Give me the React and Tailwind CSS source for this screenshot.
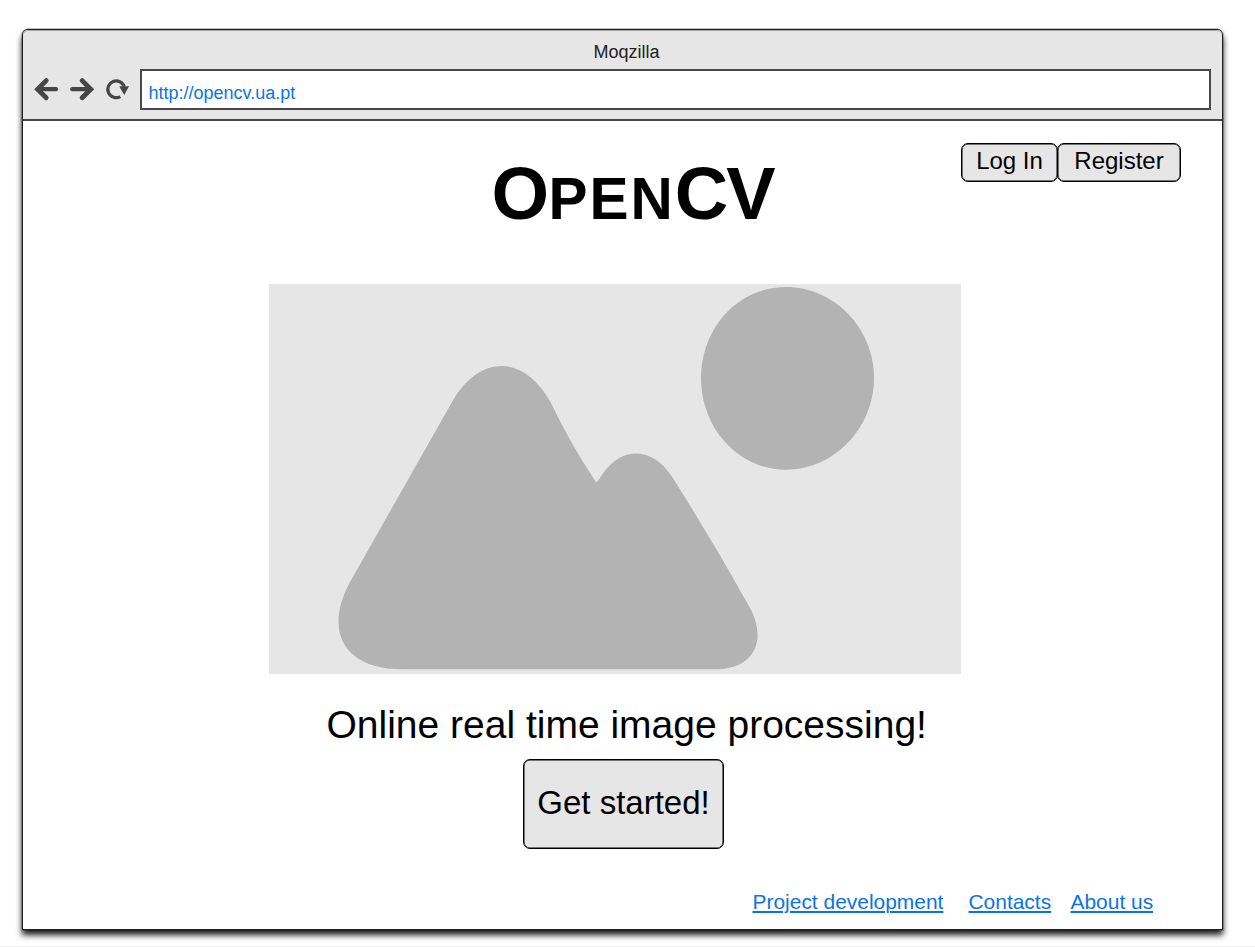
const BackArrow = () => (
  <svg width="26" height="26" viewBox="0 0 26 26" fill="none" stroke="#464646" strokeLinecap="round">
    <path d="M6 12.2H23" strokeWidth="4.2" />
    <path d="M13.200 3.600L4.600 12.200L13.200 20.800" strokeWidth="4.800" />
  </svg>
);

const ForwardArrow = () => (
  <svg width="26" height="26" viewBox="0 0 26 26" fill="none" stroke="#464646" strokeLinecap="round">
    <path d="M4.200 12.200H21" strokeWidth="4.2" />
    <path d="M14.200 3.600L22.800 12.200L14.200 20.800" strokeWidth="4.800" />
  </svg>
);

const Reload = () => (
  <svg width="26" height="26" viewBox="0 0 26 26" fill="none">
    <path d="M17.300 19.600A8.400 8.400 0 1 1 21.200 9.800" stroke="#464646" strokeWidth="3.200" />
    <path d="M16.200 9.200H26L21.200 18Z" fill="#464646" />
  </svg>
);

const Picture = () => (
  <svg className="block" width="692" height="390" viewBox="269 284 692 390">
    <rect x="269" y="284" width="692" height="390" fill="#e6e6e6" />
    <path
      d="M701 378C701 328 738 287 786 287C834 287 874 328 874 378C874 428 834 469.7 786 469.7C738 469.7 701 428 701 378Z"
      fill="#b3b3b3"
    />
    <path
      d="M452 402C479.500 354 523.500 354 550.500 402Q571 445 596.200 482.500C599 480 601 476 603 473.500C622 446.500 652 446.500 671.500 476Q713 541 749.500 607C767.500 640 755 669.300 715 669.300H402C343.500 669.300 323.500 631 350 582Z"
      fill="#b3b3b3"
    />
  </svg>
);

const Link = ({ children }) => (
  <a href="#" className="underline decoration-[1.5px] underline-offset-[2px]">{children}</a>
);

export default function App() {
  return (
    <div className="flex h-[947px] w-[1255px] flex-col overflow-hidden border-b border-[#eeeeee] bg-white pl-[22px] pt-[29px] font-['Liberation_Sans',Arial,sans-serif] text-black">
      <div className="flex h-[901px] w-[1201px] flex-col rounded-t-[6px] border border-[#231f20] bg-white shadow-[0_0_0_0.5px_rgba(35,31,32,0.5),0_5px_6px_rgba(0,0,0,0.9)]">
        <header className="flex h-[91px] shrink-0 flex-col rounded-t-[5px] border-b-2 border-[#4a4748] bg-[#e6e6e6] shadow-[inset_0_1px_0_#a8a6a6]">
          <div className="flex h-[39px] items-center justify-center pl-[8px] pt-[6px] text-[18px] text-[#222]">Moqzilla</div>
          <div className="flex h-[41px] items-center">
            <div className="flex w-[117px] gap-[9px] pl-[10px]">
              <BackArrow />
              <ForwardArrow />
              <Reload />
            </div>
            <div className="flex h-[41px] w-[1071px] items-center border-2 border-[#4a4748] bg-white pl-[6.500px] pt-[8px] text-[18px] text-[#0a74e6]">
              http://opencv.ua.pt
            </div>
          </div>
        </header>
        <main className="flex grow flex-col">
          <div className="flex h-[163px]">
            <h1 className="flex w-[938px] items-baseline pl-[468.500px] pt-[31px] text-[74px] font-bold leading-[84px]">
              <span className="tracking-[-0.500px]">O</span><span className="text-[58.500px] tracking-[2px]">PEN</span><span className="tracking-[-2px]">CV</span>
            </h1>
            <div className="flex pt-[22px] text-[24px]">
              <button className="flex h-[39px] w-[97px] justify-center rounded-[7px] border border-black bg-[#e6e6e6] pt-[3px] leading-[28px] shadow-[inset_0_0_0_0.5px_#000]">Log In</button>
              <button className="-ml-px flex h-[39px] w-[124px] justify-center rounded-[7px] border border-black bg-[#e6e6e6] pt-[3px] leading-[28px] shadow-[inset_0_0_0_0.5px_#000]">Register</button>
            </div>
          </div>
          <div className="pl-[246px]"><Picture /></div>
          <p className="mt-[29px] pl-[303.500px] text-[39px] leading-[44px]">Online real time image processing!</p>
          <button className="ml-[500px] mt-[12px] flex h-[90px] w-[201px] items-center justify-center rounded-[7px] border border-black bg-[#e6e6e6] pb-[2px] text-[33px] shadow-[inset_0_0_0_0.5px_#000]">
            Get started!
          </button>
          <nav className="mt-[41px] flex pl-[729.500px] text-[20.95px] leading-[24px] text-[#0a74e6]">
            <div className="w-[216px]"><Link>Project development</Link></div>
            <div className="w-[102px]"><Link>Contacts</Link></div>
            <Link>About us</Link>
          </nav>
        </main>
      </div>
    </div>
  );
}
